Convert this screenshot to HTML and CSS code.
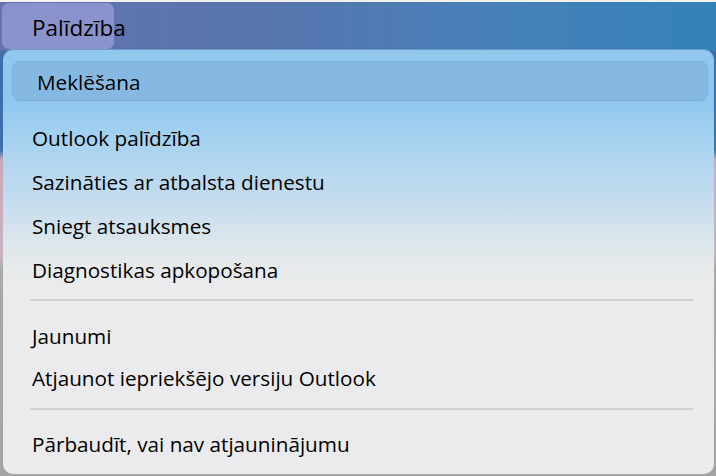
FILE: index.html
```html
<!DOCTYPE html>
<html lang="lv">
<head>
<meta charset="utf-8">
<link rel="stylesheet" href="styles.css">
</head>
<body>
<div class="topbar">
  <div class="menu-title">Palīdzība</div>
</div>
<div class="menu">
  <div class="search">Meklēšana</div>
  <div class="group g1">
    <div class="item">Outlook palīdzība</div>
    <div class="item">Sazināties ar atbalsta dienestu</div>
    <div class="item">Sniegt atsauksmes</div>
    <div class="item">Diagnostikas apkopošana</div>
  </div>
  <div class="sep sep1"></div>
  <div class="group g2">
    <div class="item">Jaunumi</div>
    <div class="item">Atjaunot iepriekšējo versiju Outlook</div>
  </div>
  <div class="sep sep2"></div>
  <div class="group g3">
    <div class="item">Pārbaudīt, vai nav atjauninājumu</div>
  </div>
</div>
</body>
</html>
```

FILE: styles.css
```css
html, body {
  margin: 0;
  padding: 0;
}
body {
  width: 716px;
  height: 476px;
  overflow: hidden;
  font-family: "Open Sans", "Liberation Sans", sans-serif;
  color: #000;
  background: linear-gradient(to bottom, #3d6fa8 0px, #3d6fa8 150px, #c9a9b9 160px, #c8b4c0 255px, #a9a9ab 270px, #a4a4a6 476px);
}
.topbar {
  height: 48px;
  border-top: 2px solid #f2f2f4;
  border-bottom: 1px solid #3e6d9c;
  background: linear-gradient(to right, #6473b2 0%, #5874ad 35%, #4680b9 70%, #3481b9 100%);
  padding: 1px 0 0 2px;
  box-sizing: content-box;
}
.menu-title {
  width: 112px;
  height: 46px;
  box-sizing: border-box;
  border-radius: 7px;
  background: #8a93cc;
  font-size: 22.5px;
  line-height: 50px;
  padding-left: 30px;
  white-space: nowrap;
  overflow: visible;
}
.menu {
  margin-left: 3px;
  width: 711px;
  height: 424px;
  margin-top: -2px;
  box-sizing: border-box;
  border-radius: 10px;
  padding-top: 11px;
  background: linear-gradient(to bottom, #92c8ee 0px, #8fc7ee 50px, #a6d2f0 90px, #c4dcee 150px, #dbe6ec 190px, #e6eaeb 215px, #ebebed 240px, #ebebed 100%);
  box-shadow: 0 -1px 0 #6b9cc8;
}
.search {
  margin: 0 6px 0 9px;
  height: 40px;
  box-sizing: border-box;
  border: 1px solid #7fb0da;
  border-radius: 8px;
  background: #86b9e2;
  font-size: 20.7px;
  line-height: 41px;
  padding-left: 24px;
}
.item {
  padding-left: 29px;
  font-size: 20.7px;
  white-space: nowrap;
}
.g1 { margin-top: 15px; }
.g1 .item { height: 44px; line-height: 45px; }
.g2 { margin-top: 14px; }
.g2 .item { height: 42px; line-height: 43px; }
.g3 { margin-top: 13px; }
.g3 .item { height: 42px; line-height: 43px; }
.sep {
  margin-left: 27px;
  width: 663px;
  height: 2px;
  background: #d2d2d4;
}
.sep1 { margin-top: 7px; }
.sep2 { margin-top: 9px; }
```
